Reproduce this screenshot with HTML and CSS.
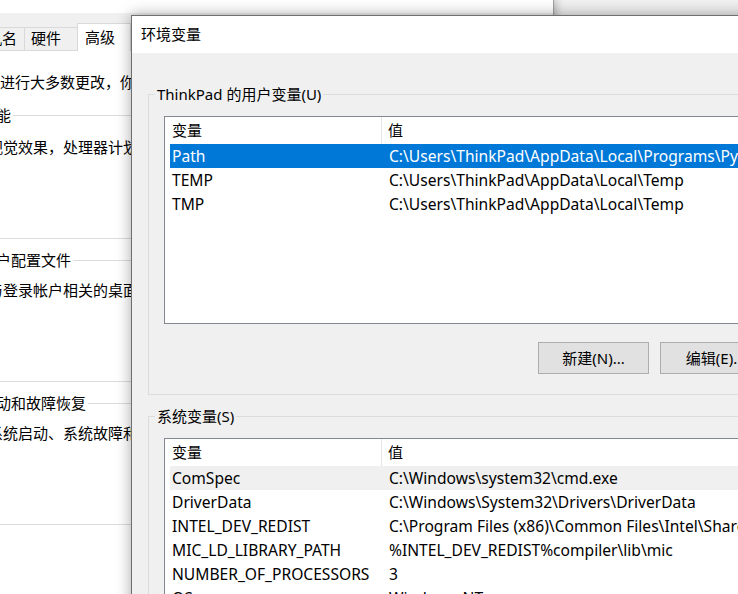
FILE: index.html
```html
<!DOCTYPE html>
<html lang="zh-CN">
<head>
<meta charset="utf-8">
<title>环境变量</title>
<link rel="stylesheet" href="styles.css">
</head>
<body>
<div class="screen">
  <div class="backwin"></div>
  <div class="syswin">
    <div class="sys-title"></div>
    <div class="sys-body">
      <div class="tabs">
        <div class="tab t1">计算机名</div>
        <div class="tab t2">硬件</div>
        <div class="tab t3 active">高级</div>
        <div class="tab t4">系统保护</div>
        <div class="tab t5">远程</div>
      </div>
      <div class="panel">
        <p class="note">要进行大多数更改，你必须作为管理员登录。</p>
        <fieldset class="sgroup">
          <legend>性能</legend>
          <p class="desc">视觉效果，处理器计划，内存使用，以及虚拟内存</p>
        </fieldset>
        <fieldset class="sgroup">
          <legend>用户配置文件</legend>
          <p class="desc">与登录帐户相关的桌面设置</p>
        </fieldset>
        <fieldset class="sgroup">
          <legend>启动和故障恢复</legend>
          <p class="desc">系统启动、系统故障和调试信息</p>
        </fieldset>
      </div>
    </div>
  </div>
  <div class="envdlg">
    <div class="env-title">环境变量</div>
    <div class="env-body">
      <fieldset class="egroup">
        <legend>ThinkPad 的用户变量(U)</legend>
        <div class="list user-list">
          <div class="lhead"><div class="hc1">变量</div><div class="hc2">值</div></div>
          <div class="row selected"><div class="c1">Path</div><div class="c2">C:\Users\ThinkPad\AppData\Local\Programs\Python\Python38\Scripts\;C:\Users\ThinkPad\AppData\Local\Programs\Python\Python38\</div></div>
          <div class="row"><div class="c1">TEMP</div><div class="c2">C:\Users\ThinkPad\AppData\Local\Temp</div></div>
          <div class="row"><div class="c1">TMP</div><div class="c2">C:\Users\ThinkPad\AppData\Local\Temp</div></div>
        </div>
        <div class="btnrow">
          <div class="btn">新建(N)...</div>
          <div class="btn">编辑(E)...</div>
          <div class="btn">删除(D)</div>
        </div>
      </fieldset>
      <fieldset class="egroup second">
        <legend>系统变量(S)</legend>
        <div class="list sys-list">
          <div class="lhead"><div class="hc1">变量</div><div class="hc2">值</div></div>
          <div class="row hover"><div class="c1">ComSpec</div><div class="c2">C:\Windows\system32\cmd.exe</div></div>
          <div class="row"><div class="c1">DriverData</div><div class="c2">C:\Windows\System32\Drivers\DriverData</div></div>
          <div class="row"><div class="c1">INTEL_DEV_REDIST</div><div class="c2">C:\Program Files (x86)\Common Files\Intel\Shared Libraries\</div></div>
          <div class="row"><div class="c1">MIC_LD_LIBRARY_PATH</div><div class="c2">%INTEL_DEV_REDIST%compiler\lib\mic</div></div>
          <div class="row"><div class="c1">NUMBER_OF_PROCESSORS</div><div class="c2">3</div></div>
          <div class="row"><div class="c1">OS</div><div class="c2">Windows_NT</div></div>
        </div>
      </fieldset>
    </div>
  </div>
</div>
</body>
</html>
```
FILE: styles.css
```css
* { box-sizing: border-box; }
html, body { margin: 0; padding: 0; }
body {
  width: 738px;
  height: 594px;
  overflow: hidden;
  background: #ececec;
  font-family: "Noto Sans", "Noto Sans CJK SC", sans-serif;
  font-size: 15px;
  color: #000;
}
.screen {
  position: relative;
  width: 738px;
  height: 594px;
  overflow: hidden;
}
p { margin: 0; }

/* window behind, top right */
.backwin {
  position: absolute;
  left: 553px;
  top: 0;
  width: 200px;
  height: 40px;
  z-index: 0;
  background: linear-gradient(to bottom, #f1f1f1, #e9e9e9);
}

/* system properties window */
.syswin {
  position: absolute;
  left: -60px;
  top: -1px;
  width: 614px;
  height: 620px;
  z-index: 1;
  background: #fff;
  border-right: 1px solid #a0a0a0;
  box-shadow: 2px 0 8px rgba(0, 0, 0, 0.25);
}
.sys-title { height: 14px; background: #fff; }
.sys-body {
  background: #f0f0f0;
  padding-top: 10px;
  height: 606px;
}
.tabs {
  display: flex;
  align-items: flex-end;
  height: 27px;
  padding-left: 10px;
  position: relative;
  z-index: 1;
}
.tab {
  height: 23px;
  border: 1px solid #d9d9d9;
  border-bottom: none;
  margin-right: -1px;
  background: #f0f0f0;
  line-height: 21px;
  padding-left: 6px;
  white-space: nowrap;
}
.t1 { width: 75px; }
.t2 { width: 54px; }
.t3 { width: 54px; }
.t4 { width: 75px; }
.t5 { width: 45px; }
.tab.active {
  height: 28px;
  margin-bottom: -1px;
  background: #fff;
  line-height: 26px;
  padding-left: 7px;
  padding-bottom: 1px;
}
.panel {
  background: #fff;
  border-top: 1px solid #d9d9d9;
  margin-left: 4px;
  height: 560px;
  padding: 21px 0 0 41px;
}
.note { line-height: 20px; }
.sgroup {
  margin: 13px 30px 0 -12px;
  padding: 12px 0 81px 14px;
  border: 1px solid #dcdcdc;
  min-width: 0;
}
.sgroup + .sgroup { margin-top: 11px; padding-top: 10px; }
.sgroup legend {
  padding: 0 2px;
  margin-left: -9px;
  line-height: 20px;
}
.desc { line-height: 20px; white-space: nowrap; }

/* environment variables dialog */
.envdlg {
  position: absolute;
  left: 131px;
  top: 15px;
  width: 796px;
  height: 620px;
  z-index: 2;
  border: 1px solid #6f6f6f;
  background: #f0f0f0;
  box-shadow: 0 0 14px rgba(0, 0, 0, 0.35);
}
.env-title {
  height: 37px;
  background: #fff;
  padding-left: 9px;
  line-height: 37px;
}
.env-body {
  padding: 31px 16px 0 16px;
}
.egroup {
  margin: 0;
  padding: 12px 16px 20px 15px;
  border: 1px solid #dcdcdc;
  min-width: 0;
}
.egroup legend {
  padding: 0 2px;
  margin-left: -9px;
  line-height: 20px;
}
.egroup.second { margin-top: 11px; }
.list {
  background: #fff;
  border: 1px solid #828790;
  overflow: hidden;
}
.user-list { height: 208px; }
.sys-list { height: 200px; }
.lhead {
  display: flex;
  height: 27px;
  line-height: 27px;
}
.hc1 {
  width: 217px;
  padding-left: 7px;
  border-right: 1px solid #e5e5e5;
}
.hc2 { padding-left: 6px; }
.row {
  display: grid;
  grid-template-columns: 212px 1fr;
  height: 24px;
  line-height: 24px;
  margin-left: 5px;
  white-space: nowrap;
  font-size: 15.6px;
}
.c1 { padding-left: 2px; overflow: hidden; }
.c2 { padding-left: 7px; overflow: hidden; }
.row.selected { background: #0078d7; color: #fff; }
.row.hover { background: #f0f0f0; }
.btnrow {
  display: flex;
  justify-content: flex-end;
  gap: 11px;
  margin-top: 18px;
}
.btn {
  width: 111px;
  height: 32px;
  border: 1px solid #adadad;
  background: #e1e1e1;
  text-align: center;
  line-height: 30px;
}
```
